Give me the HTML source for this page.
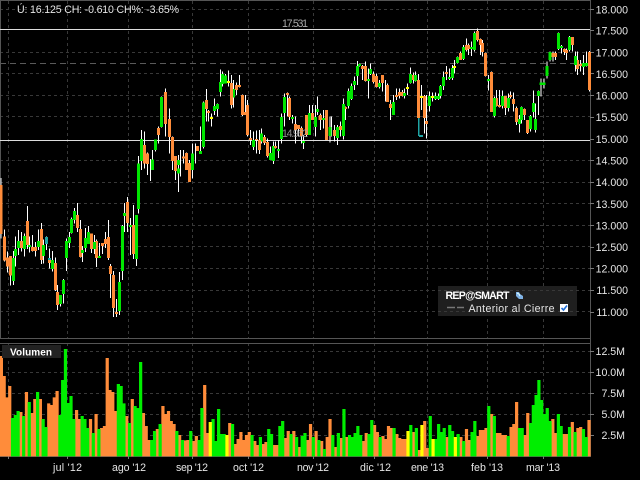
<!DOCTYPE html>
<html><head><meta charset="utf-8"><style>
html,body{margin:0;padding:0;background:#000;width:640px;height:480px;overflow:hidden}
svg{display:block;position:absolute;left:0;top:0}
text{font-family:"Liberation Sans",sans-serif;font-size:10.6px;fill:#e6e6e6}
.w{stroke:#fff;stroke-width:3;fill:none}
.o{stroke:#ff8c3a;stroke-width:9;fill:none}
.g{stroke:#00e600;stroke-width:9;fill:none}
.y{stroke:#ffff00;stroke-width:9;fill:none}
.t{stroke:#1fa5a5;stroke-width:9;fill:none}
.vo{stroke:#ff8c3a;stroke-width:1.15;fill:none}
.vg{stroke:#00ee00;stroke-width:1.15;fill:none}
.vy{stroke:#ffff00;stroke-width:1.15;fill:none}
</style></head><body>
<svg width="640" height="480" viewBox="0 0 640 480">
<rect width="640" height="480" fill="#000"/>
<g stroke="#383838" stroke-width="1" stroke-dasharray="3 3" fill="none">
<path d="M0 9.5H590M0 52.5H590M0 73.5H590M0 95.5H590M0 116.5H590M0 160.5H590M0 182.5H590M0 203.5H590M0 225.5H590M0 246.5H590M0 268.5H590M0 290.5H590M0 311.5H590"/>
<path d="M0 351.5H590M0 372.5H590M0 393.5H590M0 414.5H590M0 435.5H590"/>
<path d="M8.5 1V338M67.5 1V338M128.5 1V338M192.5 1V338M248.5 1V338M313.5 1V338M374.5 1V338M427.5 1V338M487.5 1V338M543.5 1V338"/>
<path d="M8.5 343V456M67.5 343V456M128.5 343V456M192.5 343V456M248.5 343V456M313.5 343V456M374.5 343V456M427.5 343V456M487.5 343V456M543.5 343V456"/>
</g>
<path d="M0 63.5H590" stroke="#5a5a5a" stroke-dasharray="6 4" fill="none"/>
<path d="M0 .5H591M.5 0V338M0 338.5H591M0 343.5H591M0 456.5H591M590.5 0V457" stroke="#555" fill="none"/>
<path d="M590 9.5h4M590 30.5h4M590 52.5h4M590 73.5h4M590 95.5h4M590 117.5h4M590 139.5h4M590 160.5h4M590 182.5h4M590 203.5h4M590 225.5h4M590 247.5h4M590 268.5h4M590 290.5h4M590 312.5h4M590 351.5h4M590 372.5h4M590 393.5h4M590 414.5h4M590 435.5h4M8.5 456v3M67.5 456v3M128.5 456v3M192.5 456v3M248.5 456v3M313.5 456v3M374.5 456v3M427.5 456v3M487.5 456v3M543.5 456v3" stroke="#777" fill="none"/>
<path d="M0 29.5H590M0 140.5H590" stroke="#ddd" fill="none"/>

<text x="17" y="13" textLength="162">Ú: 16.125 CH: -0.610 CH%: -3.65%</text>
<text x="282" y="27" textLength="26" style="fill:#aaa">17.531</text>

<g transform="scale(.33333)" shape-rendering="crispEdges">
<path class="w" d="M415 468V640M424 390V510M433 395V505M442 458V525M451 477V543M457 450V510M466 418V455M475 380V430M484 290V382M497 265V410M508 325V460M517 410V510M526 470V540M535 465V576M541 450V530M551 450V490M560 458V510M569 480V543M578 430V536M587 430V490M601 380V462M610 305V445M619 267V365M626 330V365M634 340V380M643 295V345M652 310V350M661 208V290M667 215V260M676 222V250M685 212V260M694 225V325M700 240V322M709 248V285M718 225V262M727 283V348M736 285V345M742 300V410M751 390V435M760 395V450M769 392V460M778 390V462M785 385V430M794 405V435M803 415V472M812 440V480M821 425V492M827 425V445M836 420V474M845 340V430M854 280V380M863 278V350M869 290V360M878 345V370M887 350V430M896 375V410M905 380V430M911 405V447M920 350V410M929 315V405M938 315V360M947 315V410M953 290V345"/>
<path class="g" d="M415 490V627M424 417V483M457 478V510M466 418V450M484 291V381M535 480V495M535 505V520M578 460V510M601 453V462M610 308V441M643 318V333M652 312V327M661 246V276M667 222V252M676 226V250M700 267V292M760 420V441M785 400V425M812 459V480M821 438V483M836 447V453M845 351V417M854 291V339M878 351V357M911 423V429M929 339V405M947 351V381M953 327V336"/>
<path class="o" d="M433 435V490M442 460V492M475 384V405M497 276V372M508 357V411M517 411V483M526 468V513M551 470V475M560 459V510M569 489V546M592 438V453M619 300V327M626 333V339M694 249V315M709 255V270M718 255V261M727 285V345M736 336V345M742 315V405M751 414V420M769 417V420M778 420V450M794 411V429M803 426V468M827 438V444M863 279V285M869 294V351M887 372V390M896 375V387M905 384V408M920 345V405M938 339V360M960 348V360"/>
<path class="y" d="M634 351V357M685 243V249"/>
</g>

<g transform="translate(0 170) scale(.33333)" shape-rendering="crispEdges">
<path class="w" d="M3 24V205M13 178V275M22 245V308M31 258V347M40 243V345M46 200V290M55 180V255M64 186V245M73 190V260M82 108V237M89 200V248M97 195V245M106 216V260M115 178V240M124 159V282M130 208V280M139 200V240M148 235V296M157 243V305M166 262V363M172 345V420M181 375V410M190 327V400M199 205V303M208 186V234M214 142V190M223 114V160M232 99V186M241 150V262M247 228V276M256 174V246M265 168V222M274 190V249M283 195V252M289 208V291M298 219V264M307 220V252M316 186V234M325 150V270M331 282V384M340 303V441M349 387V441M358 306V435M367 165V330M373 99V186M382 81V186M391 144V255M400 105V267M409 135V288"/>
<path class="o" d="M3 45V192M13 200V272M22 262V290M31 258V317M64 213V234M82 153V225M97 231V243M106 231V243M124 177V270M148 270V279M166 279V360M172 366V405M232 135V174M241 177V261M274 190V237M289 213V264M307 219V228M316 207V222M325 201V264M331 288V312M340 315V414M349 426V432M382 96V159M400 165V252"/>
<path class="g" d="M40 264V333M46 237V258M55 213V234M73 198V237M89 225V231M115 213V231M130 225V258M157 270V297M181 375V402M190 330V372M199 213V264M208 201V219M214 147V189M223 123V150M247 240V249M256 204V234M265 186V222M283 216V237M298 258V264M358 336V423M367 168V303M373 129V138M391 165V171M409 135V267"/>
<path class="t" d="M139 201V222M148 264V270"/>
</g>

<g transform="translate(320 0) scale(.33333)" shape-rendering="crispEdges">
<path class="w" d="M1 340V390M10 330V385M19 330V420M30 350V428M35 350V410M43 375V425M52 375V435M61 365V410M70 295V418M76 320V360M85 265V325M94 250V300M103 230V270M112 183V255M118 190V200M127 195V240M136 185V245M145 205V296M151 190V225M160 215V250M169 220V262M178 240V265M187 225V275M196 240V305M202 250V306M211 300V360M220 285V340M229 265V300M238 265V295M247 270V290M254 265V295M262 250V285M271 203V250M280 218V250M287 215V245M296 222V355M305 255V330M314 285V400M320 285V416M329 275V335M338 278V305M347 278V300M355 280V300M361 255V295M370 215V270M379 198V240M388 205V240M397 195V240M403 180V220M412 170V190M421 155V180M430 135V180M439 115V155M445 130V165M454 125V168M463 95V155M472 85V125M481 115V165M487 120V170M496 158V230M505 225V272M514 215V335M523 290V352M529 270V320M538 270V322M547 272V325M556 288V345M565 280V335M571 275V295M580 278V335M589 320V375M598 345V398M604 320V370M613 325V360M622 360V402M631 345V395M640 272V352M647 310V398M655 272V345M663 235V290M672 235V265M681 185V235M690 155V185M699 155V185M706 155V180M715 97V150M724 135V160M733 145V165M740 145V180M748 108V155M757 112V155M766 155V215M773 155V225M781 180V215M790 165V225M799 155V200M808 153V275"/>
<path class="o" d="M1 345V360M19 330V420M43 390V408M61 378V390M76 321V327M127 198V207M136 198V243M160 222V246M169 228V261M187 225V249M202 255V306M211 312V324M229 285V291M238 276V288M247 276V288M280 225V240M296 240V354M314 288V354M320 363V372M379 216V222M421 159V180M439 135V150M445 135V147M472 93V120M481 117V135M487 129V156M496 159V228M514 216V336M529 294V318M538 315V321M556 288V324M571 285V291M580 297V312M589 324V366M613 327V345M622 360V399M699 159V171M706 159V171M733 147V156M740 150V159M757 111V135M773 180V207M781 192V198M808 156V270"/>
<path class="g" d="M10 354V360M30 381V408M52 381V414M70 312V408M85 273V318M94 258V297M103 243V255M112 198V228M118 192V198M145 237V243M151 207V222M178 249V261M220 306V345M254 279V288M271 222V249M287 225V243M329 288V318M347 288V297M355 288V297M361 258V288M370 231V258M388 231V237M397 204V234M412 171V189M430 141V177M454 141V147M463 99V150M505 237V243M523 294V348M547 288V318M565 294V324M598 357V372M604 321V360M631 348V387M640 309V336M647 357V390M655 273V288M663 248V255M672 248V255M681 198V228M690 156V180M715 99V147M724 138V144M748 111V150M766 168V195M790 189V201M799 189V198"/>
<path class="y" d="M262 261V267M305 288V294M338 288V294M403 198V204"/>
<path d="M296 354V408" stroke="#1fa5a5" stroke-width="4" fill="none"/>
<path d="M297 408H309" stroke="#1fa5a5" stroke-width="6" fill="none"/>
</g>

<text x="282" y="137" textLength="26" style="fill:#aaa;opacity:.85">14.962</text>

<g transform="translate(0 340) scale(2.785 .33333)" shape-rendering="crispEdges">
<path class="vo" d="M0.5 48V349M1.5 108V349M2.5 172V349M3.5 138V349M7.5 216V349M9.5 156V349M11.5 219V349M12.5 177V349M14.5 177V349M17.5 190V349M18.5 195V349M19.5 172V349M20.5 153V349M27.5 210V349M28.5 237V349M32.5 237V349M34.5 222V349M36.5 264V349M37.5 258V349M38.5 54V349M39.5 150V349M40.5 156V349M41.5 213V349M45.5 228V349M47.5 177V349M51.5 219V349M52.5 258V349M53.5 300V349M56.5 267V349M58.5 198V349M59.5 222V349M60.5 213V349M61.5 243V349M62.5 252V349M64.5 285V349M66.5 301V349M67.5 300V349M69.5 303V349M70.5 288V349M73.5 135V349M74.5 279V349M82.5 249V349M84.5 312V349M85.5 297V349M86.5 276V349M87.5 300V349M88.5 285V349M89.5 276V349M91.5 303V349M92.5 315V349M94.5 312V349M95.5 306V349M98.5 315V349M99.5 315V349M102.5 294V349M103.5 273V349M105.5 273V349M107.5 321V349M110.5 300V349M111.5 252V349M113.5 273V349M115.5 303V349M117.5 291V349M118.5 237V349M120.5 321V349M122.5 294V349M124.5 291V349M130.5 303V349M131.5 279V349M134.5 255V349M135.5 276V349M137.5 288V349M138.5 297V349M139.5 258V349M140.5 264V349M142.5 282V349M143.5 294V349M144.5 297V349M145.5 297V349M148.5 276V349M150.5 330V349M152.5 243V349M153.5 324V349M160.5 291V349M165.5 291V349M167.5 267V349M168.5 300V349M171.5 288V349M172.5 270V349M173.5 270V349M174.5 264V349M176.5 222V349M178.5 279V349M179.5 279V349M180.5 285V349M181.5 285V349M183.5 261V349M184.5 252V349M185.5 186V349M188.5 285V349M189.5 219V349M198.5 237V349M199.5 279V349M202.5 282V349M203.5 282V349M205.5 246V349M207.5 264V349M208.5 261V349M211.5 240V349"/>
<path class="vg" d="M4.5 234V349M5.5 225V349M6.5 213V349M8.5 228V349M10.5 186V349M13.5 156V349M15.5 237V349M16.5 261V349M21.5 225V349M22.5 120V349M23.5 27V349M24.5 189V349M25.5 168V349M26.5 237V349M29.5 228V349M30.5 237V349M31.5 264V349M33.5 279V349M35.5 267V349M42.5 132V349M43.5 138V349M44.5 190V349M46.5 249V349M48.5 198V349M49.5 204V349M50.5 66V349M54.5 300V349M55.5 273V349M57.5 252V349M63.5 273V349M65.5 300V349M68.5 273V349M71.5 300V349M72.5 204V349M76.5 237V349M77.5 303V349M78.5 207V349M79.5 282V349M80.5 282V349M83.5 252V349M90.5 285V349M93.5 291V349M96.5 267V349M97.5 282V349M100.5 258V349M101.5 243V349M104.5 282V349M106.5 291V349M108.5 288V349M109.5 279V349M112.5 291V349M114.5 300V349M116.5 327V349M119.5 285V349M121.5 279V349M123.5 207V349M125.5 285V349M126.5 291V349M127.5 279V349M128.5 258V349M129.5 285V349M132.5 282V349M133.5 240V349M136.5 291V349M141.5 264V349M147.5 255V349M149.5 264V349M154.5 228V349M156.5 297V349M157.5 252V349M158.5 276V349M159.5 264V349M161.5 255V349M162.5 273V349M164.5 282V349M166.5 303V349M169.5 276V349M170.5 243V349M175.5 198V349M177.5 228V349M182.5 288V349M186.5 264V349M187.5 264V349M190.5 249V349M191.5 195V349M192.5 165V349M193.5 120V349M194.5 180V349M195.5 222V349M196.5 204V349M197.5 243V349M200.5 222V349M201.5 258V349M204.5 261V349M206.5 276V349M209.5 267V349M210.5 291V349"/>
<path class="vy" d="M75.5 246V349M81.5 285V349M146.5 273V349M151.5 255V349M155.5 297V349M163.5 291V349"/>
</g>

<rect x="2" y="345" width="59" height="13" fill="#222"/>
<text x="10" y="355.5" textLength="42" style="font-weight:bold;font-size:10px;fill:#fff">Volumen</text>

<rect x="438" y="286" width="139" height="30" fill="#1f1f1f"/>
<path d="M438 290.5H577M438 311.5H577" stroke="#383838" stroke-dasharray="3 3" fill="none"/>
<text x="445.5" y="299" textLength="64" style="font-weight:bold;fill:#fff">REP@SMART</text>
<path d="M516 292h3l1 2 3 2v3h-4l-3-3z" fill="#7fb2e6"/>
<path d="M517 293l2 1 1 2" stroke="#dff" fill="none"/>
<path d="M447 307.5H455M457 307.5H464" stroke="#777" stroke-width="1.5" fill="none"/>
<text x="468.5" y="312" textLength="86">Anterior al Cierre</text>
<rect x="560" y="304" width="8" height="8" fill="#fff"/>
<path d="M561.5 308l2 2 3.5-4.500" stroke="#1f6fd8" stroke-width="1.6" fill="none"/>

<g text-anchor="end">
<text x="628" y="13.5">18.000</text>
<text x="628" y="34.5">17.500</text>
<text x="628" y="56.5">17.000</text>
<text x="628" y="78">16.500</text>
<text x="628" y="99.5">16.000</text>
<text x="628" y="121">15.500</text>
<text x="628" y="143">15.000</text>
<text x="628" y="164.500">14.500</text>
<text x="628" y="186">14.000</text>
<text x="628" y="208">13.500</text>
<text x="628" y="229.500">13.000</text>
<text x="628" y="251">12.500</text>
<text x="628" y="272.500">12.000</text>
<text x="628" y="294">11.500</text>
<text x="628" y="316">11.000</text>
<text x="625" y="355">12.5M</text>
<text x="625" y="376">10.0M</text>
<text x="625" y="397">7.5M</text>
<text x="625" y="418">5.0M</text>
<text x="625" y="439">2.5M</text>
</g>

<text x="53" y="471" textLength="29">jul '12</text>
<text x="112" y="471" textLength="34">ago '12</text>
<text x="176" y="471" textLength="32">sep '12</text>
<text x="233" y="471" textLength="31">oct '12</text>
<text x="297" y="471" textLength="32">nov '12</text>
<text x="360" y="471" textLength="31">dic '12</text>
<text x="411" y="471" textLength="33">ene '13</text>
<text x="471" y="471" textLength="32">feb '13</text>
<text x="526" y="471" textLength="34">mar '13</text>
</svg>
</body></html>
